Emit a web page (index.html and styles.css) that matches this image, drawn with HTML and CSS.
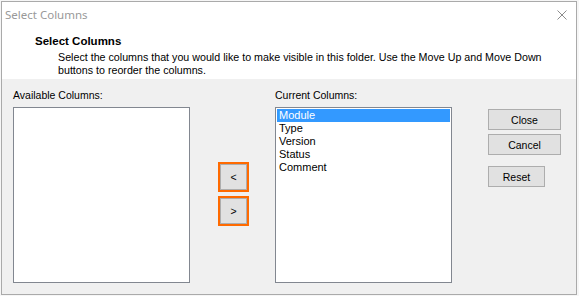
FILE: index.html
```html
<!DOCTYPE html>
<html>
<head>
<meta charset="utf-8">
<link rel="stylesheet" href="styles.css">
</head>
<body>
<div class="window">
  <div class="titlebar">
    <span class="title">Select Columns</span>
    <svg class="close-x" width="10" height="10" viewBox="0 0 10 10"><path d="M0.5 0.5 L9.5 9.5 M9.5 0.5 L0.5 9.5" stroke="#8c8c8c" stroke-width="1" fill="none"/></svg>
  </div>
  <div class="header">
    <div class="h-title">Select Columns</div>
    <div class="h-desc">Select the columns that you would like to make visible in this folder. Use the Move Up and Move Down<br>buttons to reorder the columns.</div>
  </div>
  <div class="content">
    <div class="col">
      <div class="label">Available Columns:</div>
      <div class="listbox"></div>
    </div>
    <div class="mid">
      <button class="arrow">&lt;</button>
      <button class="arrow">&gt;</button>
    </div>
    <div class="col">
      <div class="label">Current Columns:</div>
      <div class="listbox">
        <div class="item sel">Module</div>
        <div class="item">Type</div>
        <div class="item">Version</div>
        <div class="item">Status</div>
        <div class="item">Comment</div>
      </div>
    </div>
    <div class="actions">
      <button class="btn">Close</button>
      <button class="btn">Cancel</button>
      <button class="btn reset">Reset</button>
    </div>
  </div>
</div>
</body>
</html>
```
FILE: styles.css
```css
* { box-sizing: border-box; }
html, body { margin: 0; padding: 0; }
body {
  background: #f6f6f6;
  font-family: "Liberation Sans", Arial, sans-serif;
  font-size: 10.5px;
  color: #000;
}
.window {
  margin: 1px 0 0 1px;
  width: 576px;
  height: 294px;
  border: 1px solid #aaaaaa;
  background: #f0f0f0;
  display: flex;
  flex-direction: column;
}
.titlebar {
  background: #fff;
  height: 26px;
  display: flex;
  align-items: center;
  justify-content: space-between;
  padding: 0 9px 2px 3px;
}
.title {
  font-family: "Noto Sans", "Open Sans", sans-serif;
  font-size: 11.5px;
  color: #999;
}
.close-x { display: block; margin-top: 2px; }
.header {
  background: #fff;
  height: 51px;
  padding: 6px 0 0 33px;
}
.h-title {
  font-weight: bold;
  font-size: 11.5px;
  line-height: 14px;
}
.h-desc {
  margin-left: 23px;
  margin-top: 3px;
  line-height: 13px;
  font-size: 10.7px;
}
.content {
  flex: 1;
  display: flex;
  align-items: flex-start;
  padding: 10px 0 0 11px;
}
.label {
  line-height: 13px;
  margin-bottom: 5px;
}
.listbox {
  width: 177px;
  height: 176px;
  background: #fff;
  border: 1px solid #828790;
  padding: 1px;
}
.col + .mid { margin-left: 28px; }
.mid {
  margin-top: 73px;
  display: flex;
  flex-direction: column;
  gap: 4px;
  margin-right: 26px;
}
.arrow {
  width: 31px;
  height: 30px;
  border: 2px solid #ff6a00;
  background: #e1e1e1;
  box-shadow: inset 0 0 0 1px #adadad;
  font-family: "Liberation Sans", Arial, sans-serif;
  font-size: 10.5px;
  color: #000;
  padding: 0;
  margin: 0;
}
.item {
  line-height: 13px;
  padding-left: 2px;
  height: 13px;
  font-size: 11px;
}
.item.sel {
  background: #3399ff;
  color: #fff;
}
.actions {
  margin-left: 36px;
  margin-top: 20px;
  display: flex;
  flex-direction: column;
  align-items: flex-start;
}
.btn {
  width: 73px;
  height: 21px;
  border: 1px solid #adadad;
  background: #e1e1e1;
  font-family: "Liberation Sans", Arial, sans-serif;
  font-size: 10.5px;
  color: #000;
  padding: 0;
  margin: 0 0 4px 0;
}
.btn.reset {
  width: 57px;
  margin-top: 7px;
}
```
